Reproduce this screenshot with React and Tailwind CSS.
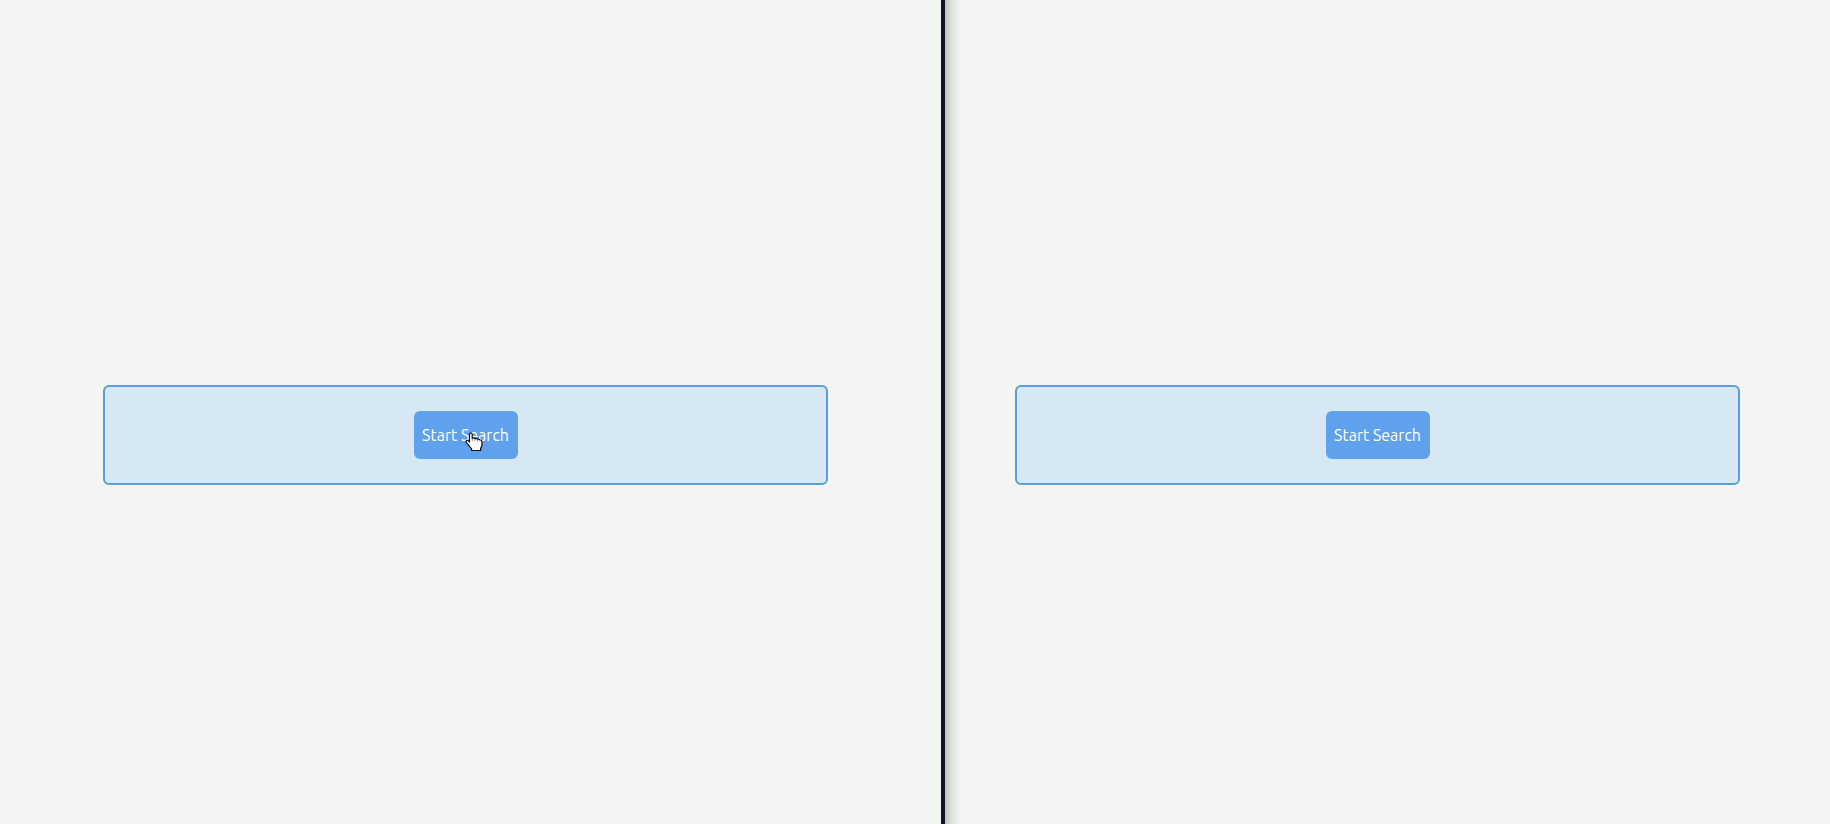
function HandCursor() {
  return (
    <svg
      className="pointer-events-none absolute left-[51px] top-[21px] h-[20px] w-[18px]"
      viewBox="0 0 18 20"
      aria-hidden="true"
    >
      <path
        d="M4.5 2.3Q4.5 1 5.8 1T7.2 2.3V6.2Q9.2 5.4 10 6.7Q11.8 6 12.6 7.3Q14.2 6.7 14.8 8Q17 7.8 17 10V12.5Q17 14.6 15.6 16.4V18.5H6.6V16.8L4 13.9L1.4 10.6Q.4 9 1.7 8.5Q2.9 8.1 4.5 10Z"
        fill="#fff"
        stroke="#111"
        strokeWidth="1.2"
        strokeLinejoin="round"
      />
      <path d="M7.3 6.5V9M10 7V9.2M12.6 7.5V9.4" stroke="#333" strokeWidth=".6" />
    </svg>
  );
}

function SearchPanel({ children }) {
  return (
    <div className="flex w-full justify-center rounded-md border-2 border-[#5b9ddb] bg-[#d7e8f5] p-6">
      <div className="relative">
        <button
          type="button"
          className="h-12 min-w-[104px] cursor-pointer rounded-md bg-[#60a1ee] px-2 text-base text-white"
        >
          Start Search
        </button>
        {children}
      </div>
    </div>
  );
}

export default function App() {
  return (
    <main className="grid min-h-screen grid-cols-[941fr_889fr] bg-[#f2f5f2] font-['Ubuntu','Noto_Sans',sans-serif]">
      <section className="flex items-center pt-[46px] pl-[103px] pr-[113px]">
        <SearchPanel>
          <HandCursor />
        </SearchPanel>
      </section>
      <section className="flex items-center border-l-4 border-[#0b1626] bg-[linear-gradient(to_right,#bfc2bf,#dcdfdc_6px,#f2f5f2_16px)] pt-[46px] pl-[70px] pr-[90px]">
        <SearchPanel />
      </section>
    </main>
  );
}
